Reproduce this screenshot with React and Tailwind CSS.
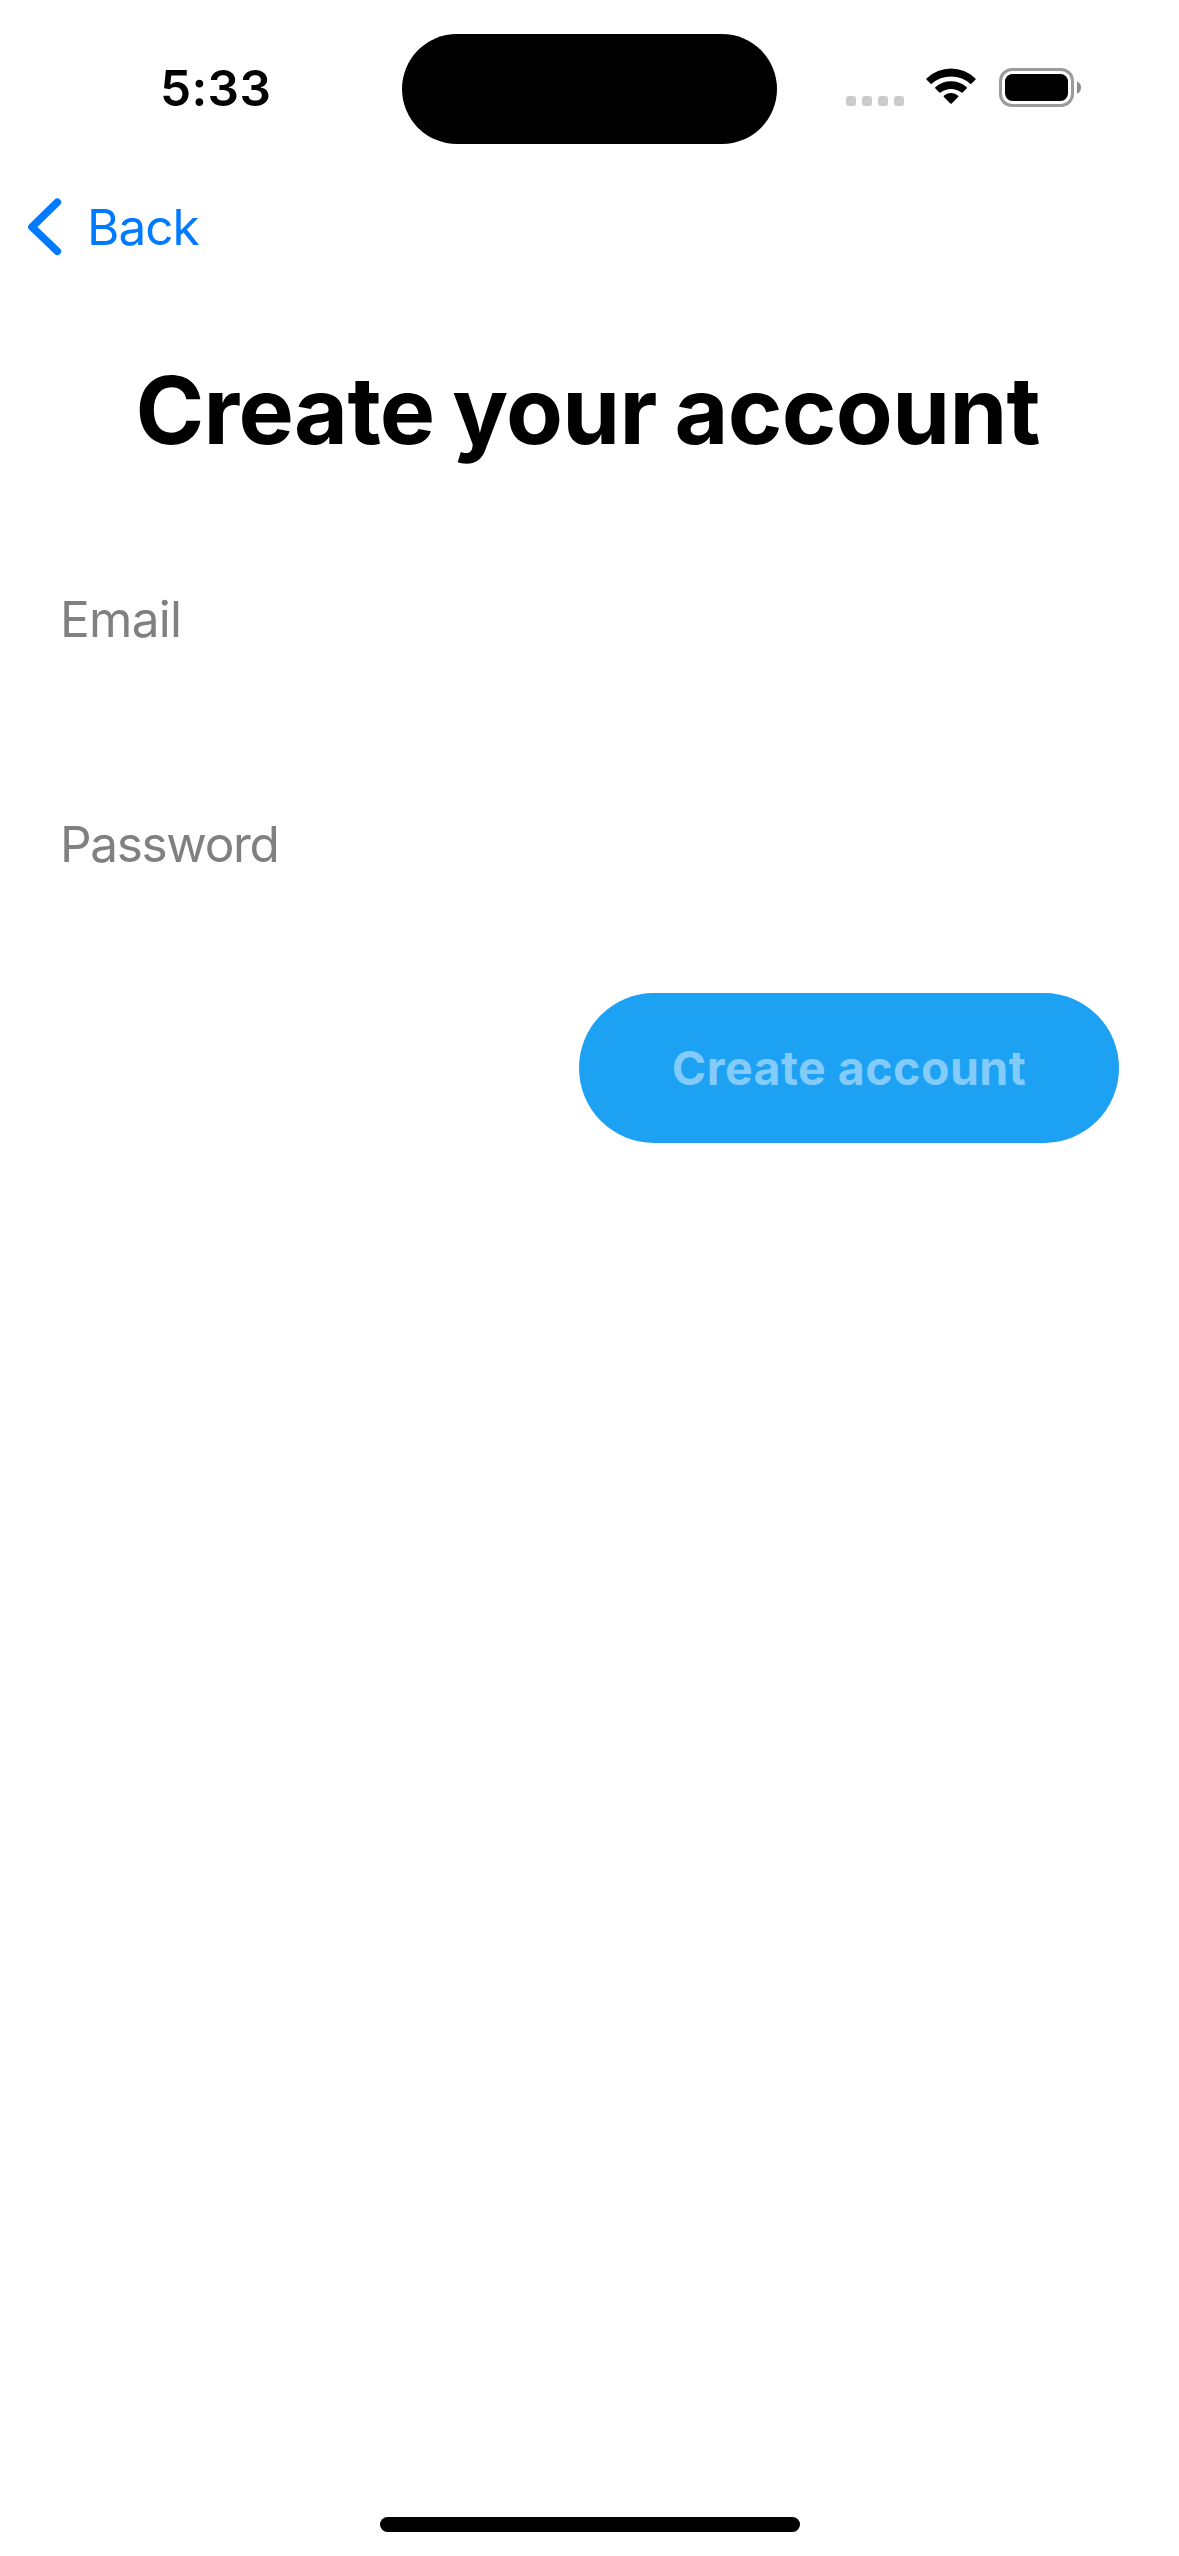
import React from "react";

function WifiIcon() {
  return (
    <svg className="h-[39px] w-[52px]" viewBox="0 0 52 39" fill="#000">
      <path d="M1.9 12Q0.8 11.2 1.8 10.3A35 35 0 0 1 50.2 10.3Q51.2 11.2 50.1 12L46.3 15.8Q45.8 16.3 45.2 15.8A28.6 28.6 0 0 0 6.8 15.8Q6.2 16.3 5.7 15.8Z" />
      <path d="M10.4 20.6Q9.6 19.8 10.5 19A23.5 23.5 0 0 1 41.5 19Q42.4 19.8 41.6 20.6L37.6 24.6Q37 25.1 36.4 24.6A16.5 16.5 0 0 0 15.6 24.6Q15 25.1 14.4 24.6Z" />
      <path d="M18.9 29Q18.1 28.2 19.1 27.5A12 12 0 0 1 32.9 27.5Q33.9 28.2 33.1 29L26.6 35.6Q26 36.2 25.4 35.6Z" />
    </svg>
  );
}

function BatteryIcon() {
  return (
    <svg className="h-[39px] w-[83px]" viewBox="0 0 83 39">
      <rect x="1.5" y="1.5" width="72" height="36" rx="11.5" fill="none" stroke="#9b9b9b" strokeWidth="3" />
      <rect x="6" y="6" width="63" height="27" rx="7.5" fill="#000" />
      <path d="M78 13.2Q82 15.2 82 19.5Q82 23.8 78 25.8Z" fill="#8c8c8c" />
    </svg>
  );
}

function StatusBar() {
  return (
    <div className="flex h-[176px] items-center">
      <div className="w-[402px] pl-[160px] text-[49.5px] leading-[60px] font-semibold tracking-[0.35px]">5:33</div>
      <div className="mt-[2px] h-[110px] w-[375px] rounded-full bg-black" />
      <div className="flex items-center pl-[69px]">
        <div className="mt-[26px] flex gap-[6px]">
          <span className="size-[10px] rounded-[3px] bg-[#cbcbcb]" />
          <span className="size-[10px] rounded-[3px] bg-[#cbcbcb]" />
          <span className="size-[10px] rounded-[3px] bg-[#cbcbcb]" />
          <span className="size-[10px] rounded-[3px] bg-[#cbcbcb]" />
        </div>
        <div className="mb-[1px] ml-[21px]">
          <WifiIcon />
        </div>
        <div className="mb-[2px] ml-[22px]">
          <BatteryIcon />
        </div>
      </div>
    </div>
  );
}

export default function App() {
  return (
    <main className="flex h-[2556px] w-[1179px] flex-col bg-white font-['Inter',sans-serif] text-black">
      <StatusBar />

      <button className="flex h-[102px] items-center self-start pl-[28px] text-[#007aff]">
        <svg className="h-[58px] w-[34px]" viewBox="0 0 34 58" fill="none">
          <path
            d="M29.3 4.2L4 29L29.3 53.3"
            stroke="currentColor"
            strokeWidth="7.6"
            strokeLinecap="round"
            strokeLinejoin="round"
          />
        </svg>
        <span className="ml-[25px] text-[49.5px] leading-[60px] tracking-[-1px]">Back</span>
      </button>

      <h1 className="pl-[135.5px] text-[93px] leading-[265px] font-bold tracking-[-0.7px] [word-spacing:-3.5px] whitespace-nowrap">
        Create your account
      </h1>

      <input
        type="email"
        placeholder="Email"
        className="h-[152px] px-[60px] text-[49.5px] tracking-[-0.72px] outline-none placeholder:text-[#808080]"
      />
      <input
        type="password"
        placeholder="Password"
        className="mt-[74px] h-[150px] px-[60px] text-[49.5px] tracking-[-1.33px] outline-none placeholder:text-[#808080]"
      />

      <button
        disabled
        className="mt-[74px] mr-[60px] h-[150px] w-[540px] self-end rounded-full bg-[#1da1f2] text-[46.6px] leading-[60px] font-bold tracking-[0.43px] text-[#83cbfa]"
      >
        Create account
      </button>

      <div className="mt-auto mb-[24px] ml-[380px] h-[15px] w-[420px] rounded-full bg-black" />
    </main>
  );
}
